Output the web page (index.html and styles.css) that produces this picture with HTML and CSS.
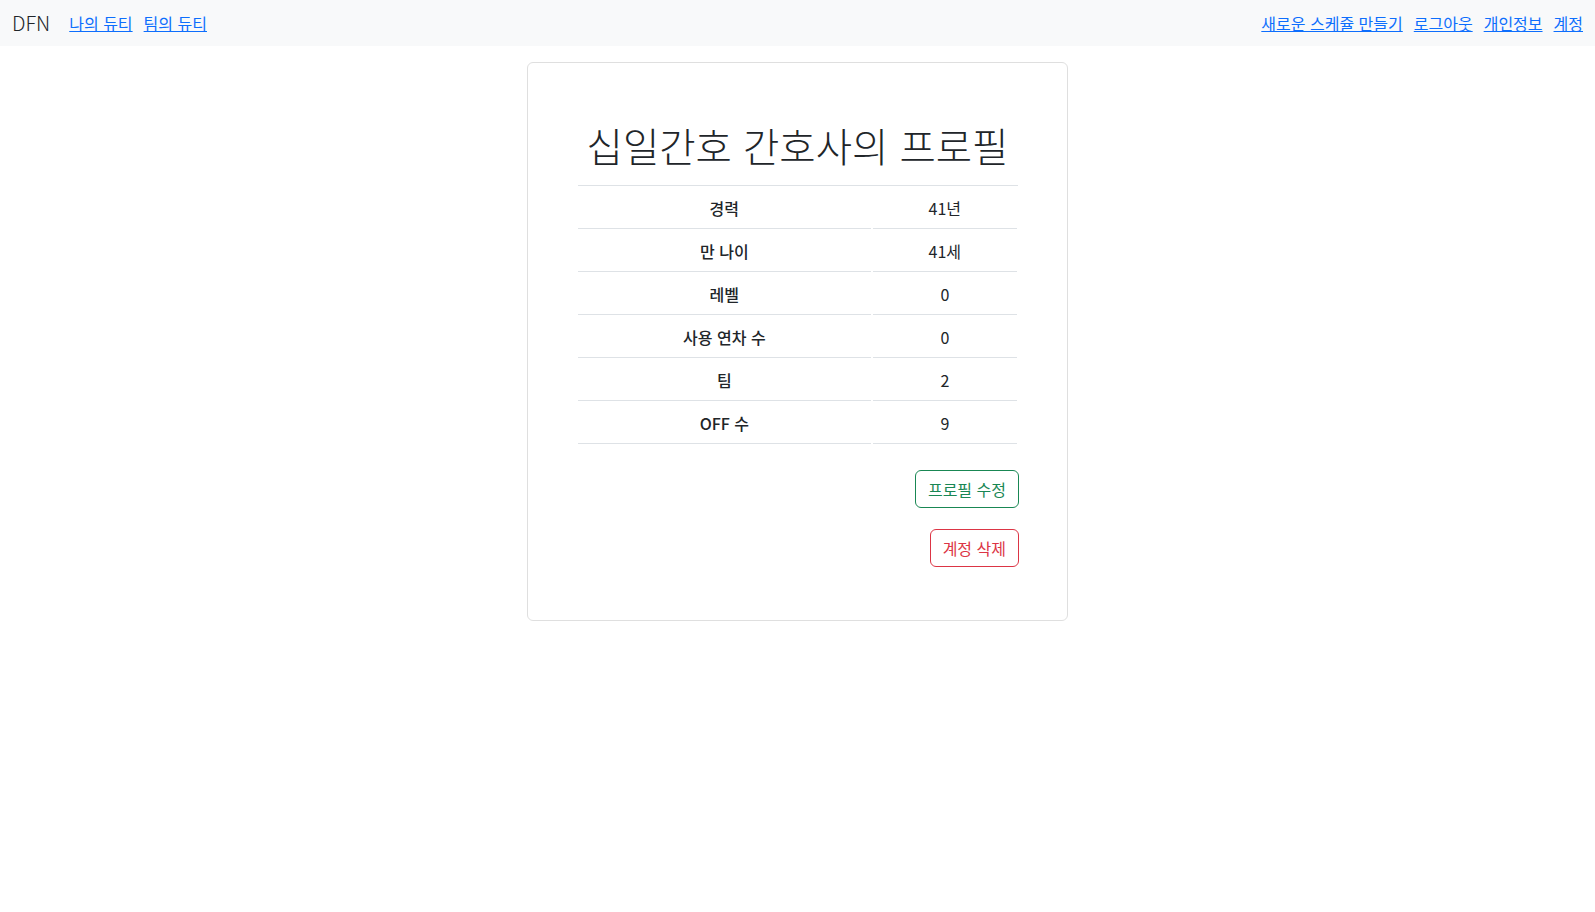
FILE: index.html
```html
<!DOCTYPE html>
<html lang="ko">
<head>
<meta charset="utf-8">
<title>DFN - 프로필</title>
<link rel="stylesheet" href="styles.css">
</head>
<body>
<nav class="navbar">
  <div class="nav-left">
    <span class="brand">DFN</span>
    <a href="#" class="nav-link">나의 듀티</a>
    <a href="#" class="nav-link">팀의 듀티</a>
  </div>
  <div class="nav-right">
    <a href="#" class="nav-link">새로운 스케쥴 만들기</a>
    <a href="#" class="nav-link">로그아웃</a>
    <a href="#" class="nav-link">개인정보</a>
    <a href="#" class="nav-link">계정</a>
  </div>
</nav>
<main class="card">
  <h1 class="title">십일간호 간호사의 프로필</h1>
  <div class="rule"></div>
  <table class="profile-table">
    <colgroup><col class="col-key"><col class="col-val"></colgroup>
    <tbody>
      <tr><th>경력</th><td>41년</td></tr>
      <tr><th>만 나이</th><td>41세</td></tr>
      <tr><th>레벨</th><td>0</td></tr>
      <tr><th>사용 연차 수</th><td>0</td></tr>
      <tr><th>팀</th><td>2</td></tr>
      <tr><th>OFF 수</th><td>9</td></tr>
    </tbody>
  </table>
  <div class="actions">
    <button class="btn btn-success" type="button">프로필 수정</button>
    <button class="btn btn-danger" type="button">계정 삭제</button>
  </div>
</main>
</body>
</html>
```

FILE: styles.css
```css
* { box-sizing: border-box; }

html, body {
  margin: 0;
  padding: 0;
  background: #fff;
}

body {
  font-family: "Noto Sans CJK KR", "Noto Sans", sans-serif;
  font-size: 16px;
  line-height: 1.5;
  color: #212529;
}

.navbar {
  display: flex;
  justify-content: space-between;
  align-items: center;
  background: #f8f9fa;
  padding: 8px 12px;
  height: 46px;
}

.nav-left,
.nav-right {
  display: flex;
  align-items: center;
  gap: 11px;
}

.brand {
  font-size: 20px;
  font-weight: 300;
  line-height: 30px;
  margin-right: 8px;
  color: #212529;
}

.nav-link {
  color: #0d6efd;
  text-decoration: underline;
  line-height: 24px;
}

.card {
  display: block;
  width: 541px;
  margin: 16px auto 0;
  border: 1px solid #dfdfdf;
  border-radius: 6px;
  padding: 48px 48px 53px;
}

.title {
  font-size: 39.5px;
  font-weight: 300;
  line-height: 1.2;
  text-align: center;
  margin: 10px 0 17px;
}

.rule {
  border-top: 1px solid #dee2e6;
  margin: 0 1px 0 2px;
}

.profile-table {
  width: 100%;
  table-layout: fixed;
  border-collapse: separate;
  border-spacing: 2px;
}

.col-key { width: 292px; }
.col-val { width: 144px; }

.profile-table th,
.profile-table td {
  padding: 8px;
  text-align: center;
  border-bottom: 1px solid #dee2e6;
  line-height: 24px;
}

.profile-table th {
  font-weight: 500;
}

.profile-table td {
  font-weight: 400;
}

.actions {
  display: flex;
  flex-direction: column;
  align-items: flex-end;
  gap: 21px;
  margin-top: 24px;
}

.btn {
  font-family: inherit;
  font-size: 16px;
  line-height: 24px;
  padding: 6px 12px;
  background: #fff;
  border: 1px solid;
  border-radius: 6px;
  cursor: pointer;
}

.btn-success {
  color: #198754;
  border-color: #198754;
}

.btn-danger {
  color: #dc3545;
  border-color: #dc3545;
}
```
